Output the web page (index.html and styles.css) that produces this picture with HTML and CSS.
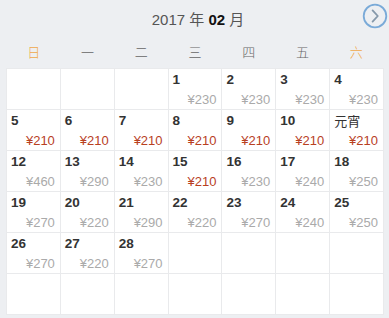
FILE: index.html
```html
<!DOCTYPE html>
<html lang="zh">
<head>
<meta charset="utf-8">
<link rel="stylesheet" href="styles.css">
</head>
<body>
<div class="cal">
  <div class="head">
    <div class="title">2017 年 <b>02</b> 月</div>
    <svg class="next" width="26" height="26" viewBox="0 0 26 26">
      <circle cx="13" cy="13" r="11.3" fill="none" stroke="#7aaad8" stroke-width="1.8"/>
      <path d="M10.6 7.4 L15.8 13 L10.6 18.6" fill="none" stroke="#8598aa" stroke-width="1.8" stroke-linecap="round" stroke-linejoin="round"/>
    </svg>
  </div>
  <div class="week">
    <span class="we">日</span><span>一</span><span>二</span><span>三</span><span>四</span><span>五</span><span class="we">六</span>
  </div>
  <div class="grid">
    <div class="cell"></div>
    <div class="cell"></div>
    <div class="cell"></div>
    <div class="cell"><span class="d">1</span><span class="p">¥230</span></div>
    <div class="cell"><span class="d">2</span><span class="p">¥230</span></div>
    <div class="cell"><span class="d">3</span><span class="p">¥230</span></div>
    <div class="cell"><span class="d">4</span><span class="p">¥230</span></div>

    <div class="cell"><span class="d">5</span><span class="p red">¥210</span></div>
    <div class="cell"><span class="d">6</span><span class="p red">¥210</span></div>
    <div class="cell"><span class="d">7</span><span class="p red">¥210</span></div>
    <div class="cell"><span class="d">8</span><span class="p red">¥210</span></div>
    <div class="cell"><span class="d">9</span><span class="p red">¥210</span></div>
    <div class="cell"><span class="d">10</span><span class="p red">¥210</span></div>
    <div class="cell"><span class="d fest">元宵</span><span class="p red">¥210</span></div>

    <div class="cell"><span class="d">12</span><span class="p">¥460</span></div>
    <div class="cell"><span class="d">13</span><span class="p">¥290</span></div>
    <div class="cell"><span class="d">14</span><span class="p">¥230</span></div>
    <div class="cell"><span class="d">15</span><span class="p red">¥210</span></div>
    <div class="cell"><span class="d">16</span><span class="p">¥230</span></div>
    <div class="cell"><span class="d">17</span><span class="p">¥240</span></div>
    <div class="cell"><span class="d">18</span><span class="p">¥250</span></div>

    <div class="cell"><span class="d">19</span><span class="p">¥270</span></div>
    <div class="cell"><span class="d">20</span><span class="p">¥220</span></div>
    <div class="cell"><span class="d">21</span><span class="p">¥290</span></div>
    <div class="cell"><span class="d">22</span><span class="p">¥220</span></div>
    <div class="cell"><span class="d">23</span><span class="p">¥270</span></div>
    <div class="cell"><span class="d">24</span><span class="p">¥240</span></div>
    <div class="cell"><span class="d">25</span><span class="p">¥250</span></div>

    <div class="cell"><span class="d">26</span><span class="p">¥270</span></div>
    <div class="cell"><span class="d">27</span><span class="p">¥220</span></div>
    <div class="cell"><span class="d">28</span><span class="p">¥270</span></div>
    <div class="cell"></div>
    <div class="cell"></div>
    <div class="cell"></div>
    <div class="cell"></div>

    <div class="cell"></div>
    <div class="cell"></div>
    <div class="cell"></div>
    <div class="cell"></div>
    <div class="cell"></div>
    <div class="cell"></div>
    <div class="cell"></div>
  </div>
</div>
</body>
</html>
```

FILE: styles.css
```css
html, body {
  margin: 0;
  padding: 0;
  background: #edeff2;
}
body {
  width: 389px;
  height: 318px;
  overflow: hidden;
  font-family: "Liberation Sans", Arial, "Noto Sans CJK SC", sans-serif;
}
.cal {
  padding: 0 6px 0 7px;
}
.head {
  position: relative;
  height: 36px;
  display: flex;
  align-items: center;
  justify-content: center;
}
.title {
  font-size: 15px;
  color: #555;
  margin-left: 6px;
}
.title b {
  color: #111;
  font-weight: bold;
}
.next {
  position: absolute;
  right: -5px;
  top: 3px;
}
.week {
  display: grid;
  grid-template-columns: repeat(7, 1fr);
  height: 30px;
  align-items: center;
  font-size: 13px;
  color: #666;
  text-align: center;
  margin-bottom: 3px;
  font-family: "Noto Sans CJK SC", sans-serif;
  font-weight: 300;
}
.week .we {
  color: #f0a84a;
}
.grid {
  display: grid;
  grid-template-columns: repeat(7, 1fr);
  grid-auto-rows: 40px;
  gap: 1px;
  width: 376px;
}
.cell {
  background: #fff;
  box-shadow: 0 0 0 1px #e9eaec;
  display: flex;
  flex-direction: column;
  justify-content: space-between;
  padding: 3px 5px 2px 4px;
  box-sizing: border-box;
}
.d {
  font-size: 13.5px;
  font-weight: bold;
  color: #333;
  line-height: 16px;
}
.d.fest {
  font-weight: normal;
  font-size: 13px;
  font-family: "Noto Sans CJK SC", sans-serif;
  color: #333;
  line-height: 16px;
}
.p {
  align-self: flex-end;
  font-size: 13px;
  color: #aaa;
  line-height: 15px;
}
.p.red {
  color: #b8401f;
}
```
